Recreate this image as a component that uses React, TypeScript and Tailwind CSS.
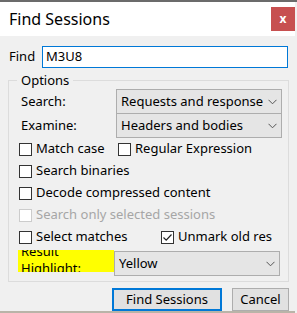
import React from "react";

const font = { fontFamily: '"Noto Sans", "Segoe UI", Arial, sans-serif' };

function Box({ checked = false, disabled = false }: { checked?: boolean; disabled?: boolean }) {
  return (
    <span
      className={`flex h-[13px] w-[13px] shrink-0 items-center justify-center border bg-white ${
        disabled ? "border-[#cccccc]" : "border-[#333333]"
      }`}
    >
      {checked && (
        <svg width="11" height="11" viewBox="0 0 11 11">
          <path d="M1.5 5.5 L4.2 8.2 L9.5 2.5" fill="none" stroke="#222" strokeWidth="1.2" />
        </svg>
      )}
    </span>
  );
}

function Check({ label, checked, disabled, w }: { label: string; checked?: boolean; disabled?: boolean; w?: string }) {
  return (
    <div className={`flex h-[22px] items-center gap-[4px] ${w ?? ""}`}>
      <Box checked={checked} disabled={disabled} />
      <span className={`whitespace-nowrap ${disabled ? "text-[#a6a6a6]" : "text-black"}`}>{label}</span>
    </div>
  );
}

function Chevron() {
  return (
    <svg width="9" height="6" viewBox="0 0 9 6" className="shrink-0">
      <path d="M0.5 0.8 L4.5 4.8 L8.5 0.8" fill="none" stroke="#555" strokeWidth="1" />
    </svg>
  );
}

function Select({ value, cls }: { value: string; cls?: string }) {
  return (
    <div
      className={`relative flex w-[166px] items-center overflow-hidden border border-[#adadad] bg-[#e5e5e5] pl-[4px] ${cls ?? ""}`}
    >
      <span className="overflow-hidden whitespace-nowrap">{value}</span>
      <div className="absolute right-0 top-0 flex h-full w-[18px] items-center justify-center bg-[#e5e5e5]">
        <Chevron />
      </div>
    </div>
  );
}

export default function App() {
  return (
    <div className="relative h-[313px] w-[297px] overflow-hidden bg-[#f0f0f0] text-[13px] text-black" style={font}>
      <div className="h-[2px] w-full bg-[#6b6b6b]" />
      <div className="flex w-[295px] flex-col">
        {/* title bar */}
        <div className="flex h-[34px] items-center justify-between bg-white pl-[9px]">
          <span className="text-[16px] leading-none">Find Sessions</span>
          <div className="flex h-[24px] w-[24px] items-center justify-center bg-[#c75050] text-[12px] font-bold leading-none text-white">
            x
          </div>
        </div>
        {/* body */}
        <div className="flex h-[275px] flex-col bg-[#f0f0f0] pt-[10px]">
          <div className="flex h-[22px] items-center pl-[9px]">
            <span className="w-[33px]">Find</span>
            <div className="flex h-[22px] w-[246px] items-center border border-[#0078d7] bg-white pl-[3px]">M3U8</div>
          </div>
          <div className="relative mx-[8px] mt-[12px] flex h-[203px] w-[281px] flex-col border border-[#dcdcdc] pt-[8px]">
            <span className="absolute left-[8px] top-[-10px] bg-[#f0f0f0] px-[4px] leading-[18px]">Options</span>
            <div className="flex h-[25px] items-center">
              <span className="w-[107px] pl-[12px]">Search:</span>
              <Select value="Requests and responses" cls="h-[25px]" />
            </div>
            <div className="-mt-px flex h-[25px] items-center">
              <span className="w-[107px] pl-[12px]">Examine:</span>
              <Select value="Headers and bodies" cls="h-[25px]" />
            </div>
            <div className="flex flex-col pl-[10px]">
              <div className="flex">
                <Check label="Match case" w="w-[99px]" />
                <Check label="Regular Expression" />
              </div>
              <Check label="Search binaries" />
              <Check label="Decode compressed content" />
              <Check label="Search only selected sessions" disabled />
              <div className="flex">
                <Check label="Select matches" w="w-[142px]" />
                <Check label="Unmark old res" checked />
              </div>
            </div>
            <div className="mt-[2px] flex items-start pl-[9px]">
              <div className="h-[22px] w-[96px] overflow-hidden bg-[#ffff00]">
                <div className="mt-[-7px] pl-[3px] text-[13px] leading-[17px]">
                  Result
                  <br />
                  Highlight:
                </div>
              </div>
              <Select value="Yellow" cls="mt-[1px] h-[25px]" />
            </div>
          </div>
          <div className="mt-[6px] flex justify-end gap-[10px] pr-[6px]">
            <div className="flex h-[23px] w-[110px] items-center justify-center border-2 border-[#0078d7] bg-[#e1e1e1]">
              Find Sessions
            </div>
            <div className="flex h-[23px] w-[57px] items-center justify-center border border-[#adadad] bg-[#e1e1e1]">
              Cancel
            </div>
          </div>
        </div>
        <div className="h-[2px] w-full bg-[#b9b4a8]" />
      </div>
    </div>
  );
}
